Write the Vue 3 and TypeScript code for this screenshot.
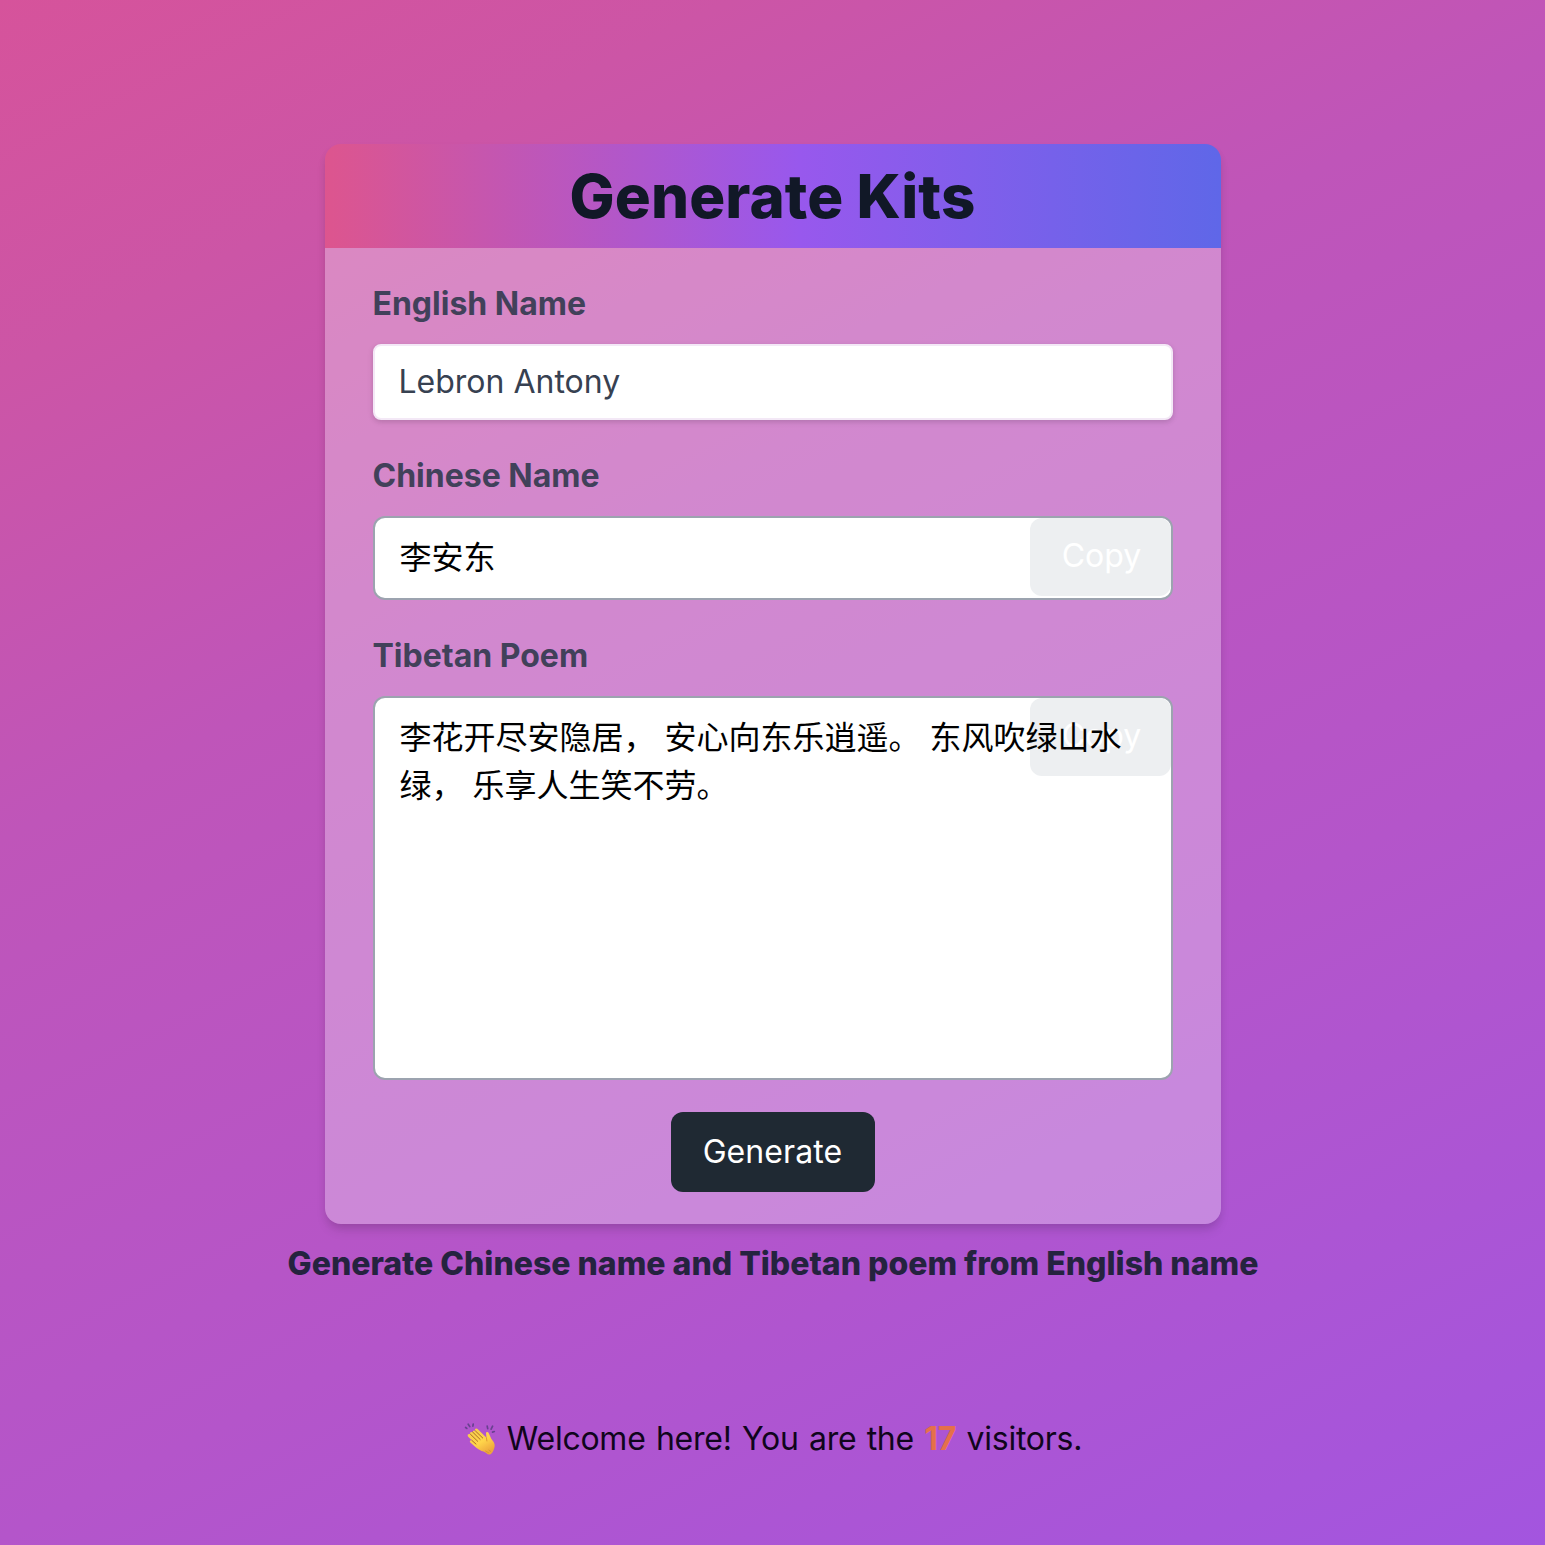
<script setup lang="ts">
import { ref } from 'vue'

const englishName = ref('Lebron Antony')
const chineseName = ref('李安东')
const poem = ref('李花开尽安隐居， 安心向东乐逍遥。 东风吹绿山水绿， 乐享人生笑不劳。')
const visitors = ref(17)
</script>

<template>
  <main class="page">
    <section class="card">
      <header class="card-head"><h1>Generate Kits</h1></header>
      <div class="card-body">
        <label class="label">English Name</label>
        <div class="input">{{ englishName }}</div>
        <label class="label second">Chinese Name</label>
        <div class="output">
          <span class="cjk">{{ chineseName }}</span>
          <button class="copy">Copy</button>
        </div>
        <label class="label third">Tibetan Poem</label>
        <div class="output poem">
          <button class="copy">Copy</button>
          <p class="cjk">{{ poem }}</p>
        </div>
        <button class="generate">Generate</button>
      </div>
    </section>
    <p class="tagline">Generate Chinese name and Tibetan poem from English name</p>
    <p class="welcome">
      <svg class="clap" viewBox="0 0 32 32">
        <defs>
          <linearGradient id="skin" x1="0" y1="0" x2="0.6" y2="1">
            <stop offset="0" stop-color="#f5c94f" />
            <stop offset="0.6" stop-color="#ffd54a" />
            <stop offset="1" stop-color="#eda63c" />
          </linearGradient>
        </defs>
        <g fill="none" stroke="#684190" stroke-width="1.7" stroke-linecap="round">
          <path d="M1.6 4.5l1.2.9M4.2 1.2l1.6 2.4M9.2 1.2l-.3 2M23.2 3.2l.5 2.5M28.6 3.2l-1.5 3M30.3 8.5l-1.8.6" />
        </g>
        <path fill="url(#skin)" d="M11 6.2c1-1.2 2.2-.5 3.1.4l8.4 8.2-.5-4.3c0-1.6 2-2 2.8-.3l2.1 4.7c.5 1.2 1.7 2.3 2.8 4.2 1.7 3 1 5.7-.2 8.2-1.2 2.500-2.500 4.600-4.700 4.200-2-.4-3.200-2.100-5.300-2.900-2.600-1-4.800-1.800-7.200-3.900l-5.700-5c-1.600-1.500-.3-3.100 1.200-2.400l-3.600-3.600c-1.500-1.800.4-3.400 2-2.200-1-1.800.7-3.200 2.400-2 .2-1.700 1.300-2.600 2.400-1.300z" />
        <path fill="none" stroke="#a96d27" stroke-width="1" stroke-linecap="round" d="M6.5 11.3l7.2 7M8.6 9l7.5 7.4M11.5 8l7.2 7M7.8 17.3l4.2 3.8" />
        <path fill="none" stroke="#dc9634" stroke-width="1" stroke-linecap="round" d="M22.5 14.8l.4 3.2M24.6 29.8l-3-1.8M26.8 28.5l-1.8-1.3" />
      </svg>
      <span>Welcome here! You are the <b>{{ visitors }}</b> visitors.</span>
    </p>
  </main>
</template>

<style>
body {
  margin: 0;
}
</style>

<style scoped>
* {
  box-sizing: border-box;
}
.page {
  height: 1545px;
  overflow: hidden;
  display: flex;
  flex-direction: column;
  align-items: center;
  padding-top: 144px;
  background: linear-gradient(153deg, #d6539b 0%, #cc55a6 16%, #bf55b9 36%, #b455ca 66%, #a355df 100%);
  font-family: Inter, 'Noto Sans CJK SC', sans-serif;
  font-size: 32px;
  line-height: 48px;
}
h1,
p {
  margin: 0;
}
.card {
  width: 896px;
  height: 1080px;
  flex: none;
  border-radius: 16px;
  overflow: hidden;
  box-shadow: 0 8px 12px -2px rgba(0, 0, 0, 0.1), 0 4px 8px -2px rgba(0, 0, 0, 0.1);
}
.card-head {
  height: 104px;
  display: flex;
  align-items: center;
  justify-content: center;
  background: linear-gradient(90deg, #dd558e 0%, #9858ed 53%, #5f67e8 100%);
}
h1 {
  font-size: 60px;
  line-height: 72px;
  font-weight: 800;
  letter-spacing: 0.1px;
  color: #111827;
}
.card-body {
  height: 976px;
  padding: 32px 48px;
  display: flex;
  flex-direction: column;
  background: rgba(255, 255, 255, 0.3);
}
.label {
  font-weight: 700;
  color: #41415a;
  margin-bottom: 16px;
}
.second {
  margin-top: 32px;
}
.third {
  margin-top: 32px;
}
.input {
  height: 76px;
  padding: 12px 24px;
  border: 2px solid #f3e8f6;
  border-radius: 8px;
  background: #fff;
  color: #374151;
  box-shadow: 0 2px 6px rgba(0, 0, 0, 0.1), 0 2px 4px rgba(0, 0, 0, 0.06);
}
.output {
  position: relative;
  height: 84px;
  padding: 16px 23px 16px 25px;
  border: 2px solid #9ca3af;
  border-radius: 12px;
  background: #fff;
  color: #000;
}
.poem {
  height: 384px;
}
.cjk {
  position: relative;
}
.copy {
  position: absolute;
  top: 0;
  right: 0;
  width: 141px;
  height: 78px;
  padding: 0 0 2px 3px;
  border: 0;
  border-radius: 12px;
  background: #edeff1;
  color: #fff;
  font: inherit;
}
.generate {
  align-self: center;
  width: 204px;
  height: 80px;
  margin-top: 32px;
  padding: 0;
  border: 0;
  border-radius: 12px;
  background: #1f2933;
  color: #fff;
  font: inherit;
  letter-spacing: 0.1px;
}
.tagline {
  margin-top: 16px;
  padding-left: 1px;
  font-weight: 800;
  color: #25233f;
  white-space: nowrap;
}
.welcome {
  margin-top: 127px;
  padding-left: 1px;
  display: flex;
  align-items: center;
  gap: 11px;
  color: #10051c;
  letter-spacing: -0.25px;
  word-spacing: 1.6px;
  white-space: nowrap;
}
.clap {
  width: 32px;
  height: 32px;
}
.welcome b {
  color: #e5704a;
}
</style>
